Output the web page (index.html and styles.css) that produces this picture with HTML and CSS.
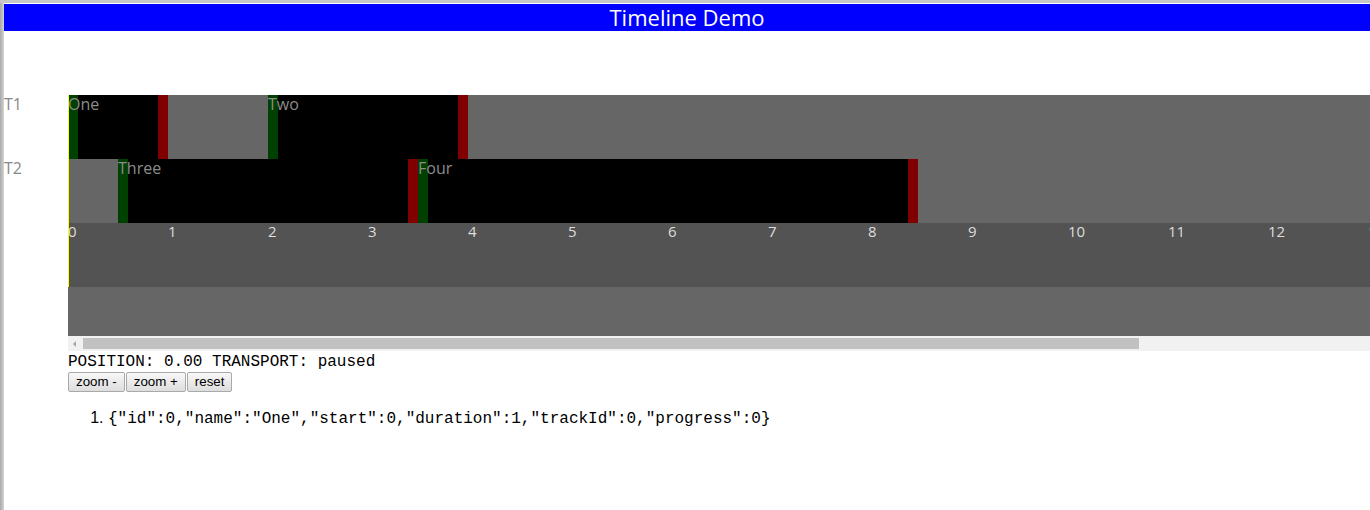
FILE: index.html
```html
<!DOCTYPE html>
<html>
<head>
<meta charset="utf-8">
<title>Timeline Demo</title>
<link rel="stylesheet" href="styles.css">
</head>
<body>
<div class="frame">
  <h1 class="title">Timeline Demo</h1>
  <div class="timeline">
    <div class="track-labels">
      <div class="track-label">T1</div>
      <div class="track-label">T2</div>
    </div>
    <div class="viewport">
      <div class="content">
        <div class="track">
          <div class="item" style="left:0px;width:100px"><span class="item-name">One</span></div>
          <div class="item" style="left:200px;width:200px"><span class="item-name">Two</span></div>
        </div>
        <div class="track">
          <div class="item" style="left:50px;width:300px"><span class="item-name">Three</span></div>
          <div class="item" style="left:350px;width:500px"><span class="item-name">Four</span></div>
        </div>
        <div class="ruler">
          <div class="tick">0</div><div class="tick">1</div><div class="tick">2</div><div class="tick">3</div>
          <div class="tick">4</div><div class="tick">5</div><div class="tick">6</div><div class="tick">7</div>
          <div class="tick">8</div><div class="tick">9</div><div class="tick">10</div><div class="tick">11</div>
          <div class="tick">12</div><div class="tick">13</div>
        </div>
        <div class="filler"></div>
        <div class="playhead"></div>
      </div>
      <div class="scrollbar">
        <div class="scroll-arrow"></div>
        <div class="scroll-thumb"></div>
      </div>
    </div>
  </div>
  <div class="status">POSITION: 0.00 TRANSPORT: paused</div>
  <div class="controls"><button class="btn">zoom -</button><button class="btn">zoom +</button><button class="btn">reset</button></div>
  <ol class="selection">
    <li><span class="json">{"id":0,"name":"One","start":0,"duration":1,"trackId":0,"progress":0}</span></li>
  </ol>
</div>
</body>
</html>
```

FILE: styles.css
```css
html, body {
  height: 100%;
}
body {
  margin: 0;
  box-sizing: border-box;
  padding: 4px 0 0 4px;
  background:
    linear-gradient(#c6c6c6, #c6c6c6) 0 0 / 100% 3px no-repeat,
    linear-gradient(to right, #a8a8a8, #d4d4d4) 0 0 / 4px 100% no-repeat,
    #ffffff;
  font-family: "Liberation Sans", Arial, sans-serif;
  overflow: hidden;
}
.frame {
  width: 1366px;
}
.title {
  margin: 0;
  height: 27px;
  background: #0000ff;
  color: #ffffff;
  font-family: "Open Sans", "Noto Sans", sans-serif;
  font-weight: 400;
  font-size: 22px;
  line-height: 27px;
  text-align: center;
}
.timeline {
  display: flex;
  margin-top: 64px;
}
.track-labels {
  width: 64px;
  flex: none;
}
.track-label {
  height: 64px;
  color: #888888;
  font-family: "Open Sans", "Noto Sans", sans-serif;
  font-size: 16px;
  line-height: 18px;
}
.viewport {
  width: 1302px;
  overflow: hidden;
}
.content {
  position: relative;
  width: 1600px;
}
.track {
  position: relative;
  height: 64px;
  background: #666666;
}
.item {
  position: absolute;
  top: 0;
  height: 64px;
  box-sizing: border-box;
  background: #000000;
  border-left: 10px solid #004000;
  border-right: 10px solid #800000;
}
.item-name {
  position: absolute;
  left: -10px;
  top: 0;
  color: #8c8c8c;
  font-family: "Open Sans", "Noto Sans", sans-serif;
  font-size: 16px;
  line-height: 18px;
  white-space: nowrap;
}
.ruler {
  display: flex;
  height: 64px;
  background: #535353;
}
.tick {
  width: 100px;
  flex: none;
  color: #dddddd;
  font-family: "Open Sans", "Noto Sans", sans-serif;
  font-size: 15px;
  line-height: 17px;
}
.filler {
  height: 49px;
  background: #666666;
}
.playhead {
  position: absolute;
  left: 0;
  top: 0;
  width: 1px;
  height: 192px;
  background: #ffff00;
}
.scrollbar {
  display: flex;
  align-items: center;
  height: 15px;
  background: #f1f1f1;
}
.scroll-arrow {
  width: 0;
  height: 0;
  margin-left: 5px;
  border-top: 3px solid transparent;
  border-bottom: 3px solid transparent;
  border-right: 3px solid #a3a3a3;
}
.scroll-thumb {
  margin-left: 7px;
  width: 1056px;
  height: 11px;
  background: #c1c1c1;
}
.status {
  margin-left: 64px;
  padding-top: 2px;
  font-family: "Liberation Mono", "Courier New", monospace;
  font-size: 16px;
  line-height: 19px;
  color: #000000;
}
.controls {
  display: flex;
  gap: 1px;
  margin-left: 64px;
}
.btn {
  height: 20px;
  padding: 0 7px;
  border: 1px solid #a9a9a9;
  border-radius: 2px;
  background: linear-gradient(#f8f8f8, #dddddd);
  color: #000000;
  font-family: "Liberation Sans", Arial, sans-serif;
  font-size: 13.33px;
  line-height: 18px;
}
.selection {
  margin: 16px 0 0 64px;
  padding-left: 40px;
  font-size: 16px;
  line-height: 19px;
}
.json {
  font-family: "Liberation Mono", "Courier New", monospace;
}
```
